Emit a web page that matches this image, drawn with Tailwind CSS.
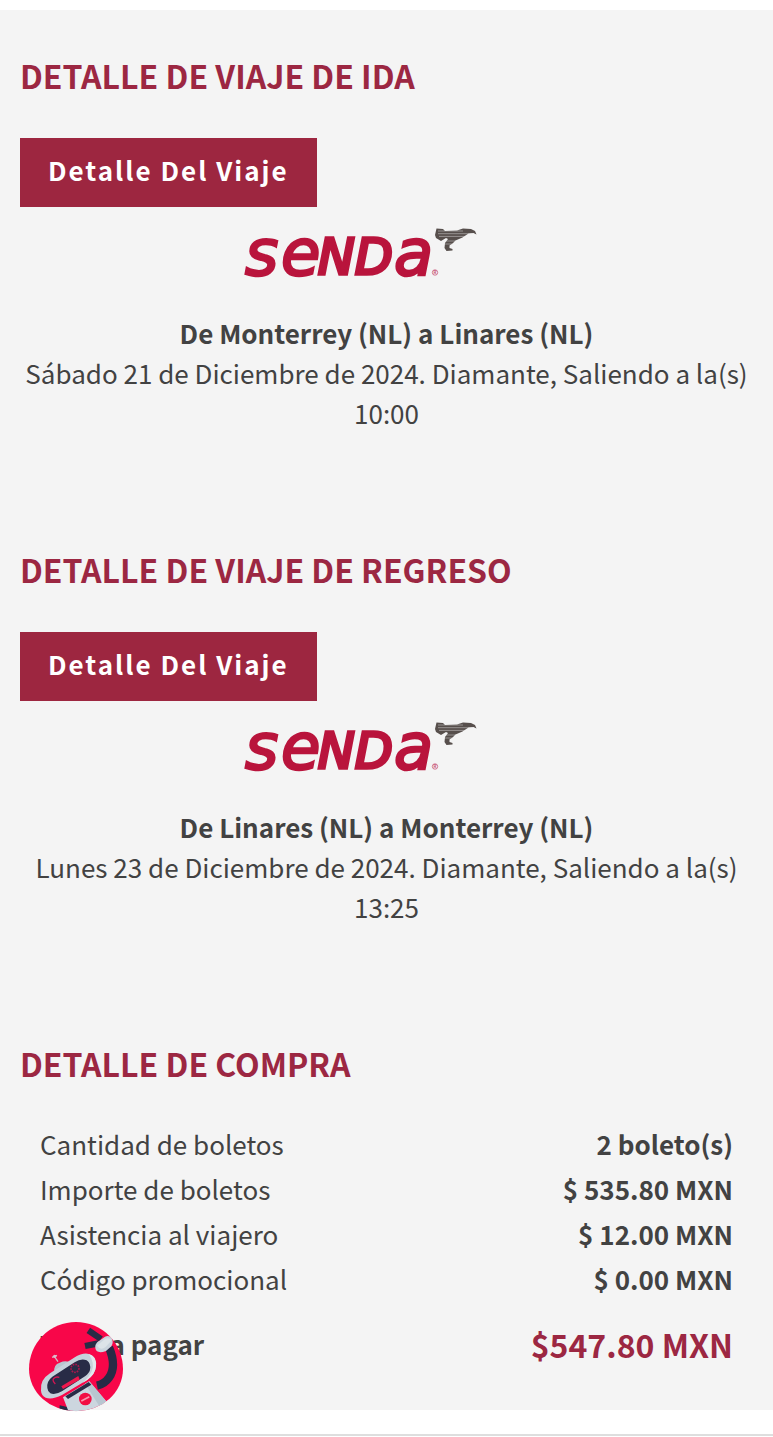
<!DOCTYPE html>
<html lang="es">
  <head>
    <meta charset="UTF-8" />
    <meta name="viewport" content="width=device-width, initial-scale=1.0" />
    <title>Detalle de compra</title>
    <script src="https://cdn.jsdelivr.net/npm/@tailwindcss/browser@4"></script>
  </head>
  <body class="bg-white pt-[10px] font-['Noto_Sans_CJK_SC','Open_Sans',sans-serif] text-[26px] leading-[40px] text-[#424242]">
    <!-- shared logo -->
    <svg class="hidden">
      <symbol id="logo" viewBox="0 0 260 75">
        <g fill="#b9143c" stroke="#b9143c" stroke-width="2.500" font-family="DejaVu Sans" font-style="italic">
          <text y="60" font-size="64"><tspan x="14">s</tspan><tspan x="50">e</tspan></text>
          <text y="59" font-size="49" stroke-width="3.500"><tspan x="87">N</tspan><tspan x="124">D</tspan></text>
          <text y="60" font-size="64" x="163">a</text>
        </g>
        <circle cx="204" cy="57.500" r="2.700" fill="none" stroke="#c9587a" stroke-width=".8" />
        <text x="202.500" y="59.200" font-family="Inter" font-size="4.500" font-weight="700" fill="#c9587a">R</text>
        <path fill="#574f4c" d="M205.500 13.500L212 14l2 2 12-.5 6-2 8 .5 4 2 1.500 3.500-3-1.500-5 .5-6 4-7 3-3 3-3 2v2.500l3 1v1.500l-6 .5-2-3 .5-5 3-4-2-1-5 3-5-3-1-3z" />
        <path stroke="#f4f4f4" stroke-opacity=".6" stroke-width=".7" d="M207 16h25M207 18.700h34M208 21.400h27M213 26h12M213 29h9" />
      </symbol>
    </svg>

    <main class="bg-[#f4f4f4] px-5 pb-[23px]">
      <section class="h-[494px] pt-[45px]">
        <h2 class="text-[32px] font-bold text-[#9c2742]">DETALLE DE VIAJE DE IDA</h2>
        <button class="mt-[43px] block h-[69px] bg-[#9d2640] px-7 pb-[6px] text-[26px] font-bold tracking-[2px] text-white">Detalle Del Viaje</button>
        <svg class="mx-auto mt-2 block h-[75px] w-[260px] -translate-x-[26px]" role="img" aria-label="Senda"><use href="#logo" /></svg>
        <div class="mt-[23px] text-center">
          <p class="font-bold">De Monterrey (NL) a Linares (NL)</p>
          <p>Sábado 21 de Diciembre de 2024. Diamante, Saliendo a la(s) 10:00</p>
        </div>
      </section>

      <section class="h-[494px] pt-[45px]">
        <h2 class="text-[32px] font-bold text-[#9c2742]">DETALLE DE VIAJE DE REGRESO</h2>
        <button class="mt-[43px] block h-[69px] bg-[#9d2640] px-7 pb-[6px] text-[26px] font-bold tracking-[2px] text-white">Detalle Del Viaje</button>
        <svg class="mx-auto mt-2 block h-[75px] w-[260px] -translate-x-[26px]" role="img" aria-label="Senda"><use href="#logo" /></svg>
        <div class="mt-[23px] text-center">
          <p class="font-bold">De Linares (NL) a Monterrey (NL)</p>
          <p>Lunes 23 de Diciembre de 2024. Diamante, Saliendo a la(s) 13:25</p>
        </div>
      </section>

      <section class="pt-[45px]">
        <h2 class="text-[32px] font-bold text-[#9c2742]">DETALLE DE COMPRA</h2>
        <div class="px-5 pt-[38px]">
          <table class="w-full">
            <tbody>
              <tr class="h-[45px]">
                <th scope="row" class="text-left font-normal">Cantidad de boletos</th>
                <td class="text-right font-bold">2 boleto(s)</td>
              </tr>
              <tr class="h-[45px]">
                <th scope="row" class="text-left font-normal">Importe de boletos</th>
                <td class="text-right font-bold">$ 535.80 MXN</td>
              </tr>
              <tr class="h-[45px]">
                <th scope="row" class="text-left font-normal">Asistencia al viajero</th>
                <td class="text-right font-bold">$ 12.00 MXN</td>
              </tr>
              <tr class="h-[45px]">
                <th scope="row" class="text-left font-normal">Código promocional</th>
                <td class="text-right font-bold">$ 0.00 MXN</td>
              </tr>
              <tr class="h-[86px]">
                <th scope="row" class="text-left font-bold">Total a pagar</th>
                <td class="text-right text-[32px] font-bold text-[#9c2742]">$547.80 MXN</td>
              </tr>
            </tbody>
          </table>
        </div>
      </section>
    </main>
    <footer class="h-[26px] border-b-2 border-[#dedede] bg-white"></footer>

    <!-- chat bot -->
    <button class="fixed bottom-[21px] left-[25px] h-[98px] w-[102px]" aria-label="Chat">
      <svg viewBox="0 0 306 294" class="h-full w-full">
        <clipPath id="face"><path d="M12 153A141 141 0 0 1 294 153A141 127 0 0 1 12 153Z" /></clipPath>
        <g clip-path="url(#face)">
          <path fill="#f80649" d="M0 0h306v294H0z" />
          <path d="M252 88Q276 145 252 179Q239 198 216 203" fill="none" stroke="#282b46" stroke-width="25" />
          <path d="M104 262l26 6 14 24h-42z" fill="#282b46" />
          <path d="M190 37l38 26M180 84l40-8" stroke="#282b46" stroke-width="19" />
          <path d="M114 238L193 190L248 255L222 294H136Z" fill="#ccd6df" />
          <path d="M193 190l55 65-16 23-52-81z" fill="#b8c6d0" />
          <path d="M121 235l70-43 8 8-70 43z" fill="#282b46" />
          <path d="M88 162Q85 140 104 134Q125 125 139 136Z" fill="#b9c5cf" />
          <path d="M48 218Q44 186 75 166L147 119Q180 99 199 111Q216 121 213 145Q211 169 185 187L111 231Q81 246 62 239Q49 233 48 218Z" fill="#c6d1db" />
          <path d="M191 108Q215 113 213 145Q211 169 188 185L174 194Q210 160 203 134Q200 119 191 108Z" fill="#e2e9ed" />
          <path d="M67 210Q64 190 82 176L149 133Q168 120 185 127Q199 137 195 156Q193 165 180 175L112 219Q91 232 76 226Q68 220 67 210Z" fill="#282b46" />
          <path d="M99 131L90 118M81 118L96 112" stroke="#ccb8c5" stroke-width="4" />
          <circle cx="89" cy="115" r="5" fill="#ddbccc" />
          <circle cx="150" cy="151" r="12" fill="none" stroke="#a9184d" stroke-width="5" stroke-dasharray="5 3" />
          <path d="M91 198Q77 184 91 178q5-2 12 0" fill="none" stroke="#d01653" stroke-width="4" />
          <path d="M109 205L160 174l4 11-50 28z" fill="#ef174d" />
          <circle cx="181" cy="243" r="19" fill="#f20d43" />
          <path d="M169 249l24-13" stroke="#f895ae" stroke-width="5" />
        </g>
        <path d="M211 91Q208 77 223 68L240 56Q253 51 260 61Q267 73 259 85L243 99Q215 109 211 91Z" fill="#cbd5de" />
        <path d="M216 83L240 63Q253 57 259 68L241 88Q226 98 216 83Z" fill="#dde4e9" />
      </svg>
    </button>
  </body>
</html>
